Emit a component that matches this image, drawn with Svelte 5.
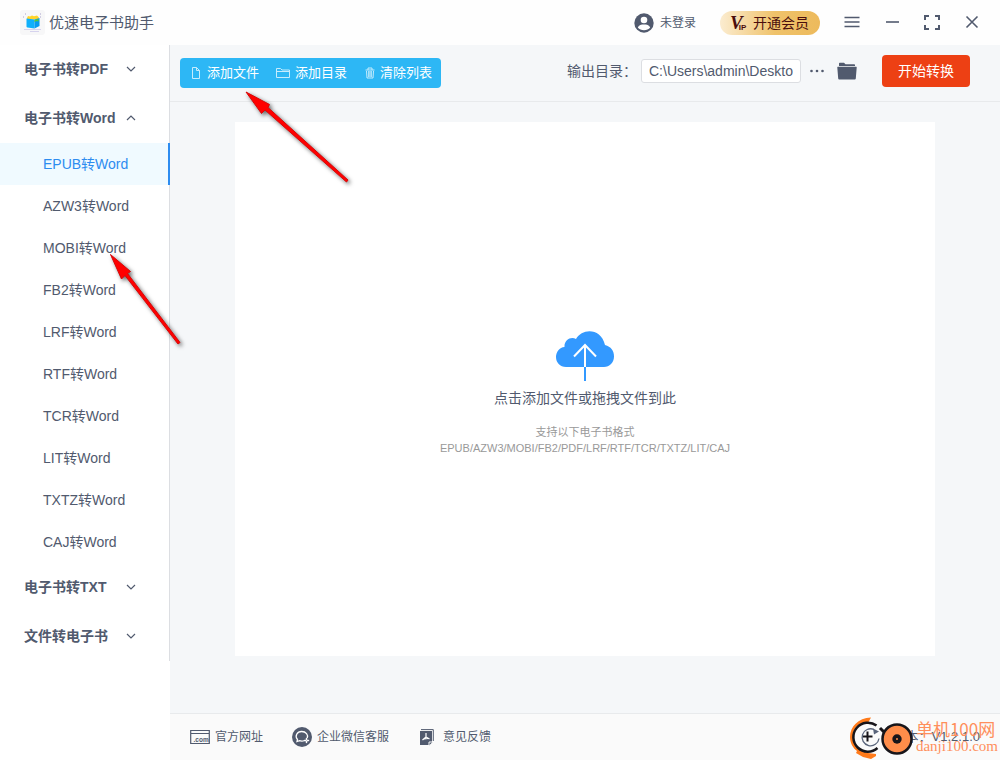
<script>
  const groups = [
    { label: '电子书转PDF', open: false, items: [] },
    {
      label: '电子书转Word',
      open: true,
      items: ['EPUB', 'AZW3', 'MOBI', 'FB2', 'LRF', 'RTF', 'TCR', 'LIT', 'TXTZ', 'CAJ'].map((f) => f + '转Word')
    },
    { label: '电子书转TXT', open: false, items: [] },
    { label: '文件转电子书', open: false, items: [] }
  ];
  let active = $state('EPUB转Word');
  let path = $state('C:\\Users\\admin\\Desktop');
</script>

<div class="app">
  <header>
    <div class="brand">
      <svg width="25" height="25" viewBox="0 0 25 25">
        <rect width="25" height="25" rx="3" fill="#f7f7f8" />
        <path d="M7 8l1-2 2 .5 2-1 2 .7 3-.7 2 2-1 2H7z" fill="#ffd42a" />
        <path d="M6.500 8.500l8 1v9l-7-1q-1 0-1-1z" fill="#0fb0fb" />
        <path d="M14.500 9.500l5-1.500v8l-5 2.500z" fill="#079bf0" />
        <path d="M14.500 10l4-1v2.500l-2-.5-2 1z" fill="#52cc38" />
        <path d="M4 19.500h17M10 21.500h9" stroke="#d6d3ee" stroke-width="1" />
        <path d="M3 7h1M20 4h1M20 7h1M5 4h1" stroke="#aaa3cc" />
      </svg>
      <span>优速电子书助手</span>
    </div>
    <div class="tools">
      <button class="plain user">
        <svg width="20" height="20" viewBox="0 0 20 20">
          <circle cx="10" cy="10" r="9.700" fill="#515a6e" />
          <circle cx="10" cy="7" r="3.300" fill="#fff" />
          <path d="M3.800 14.500c1-2.500 3.500-2.900 6.200-2.900s5.200.4 6.200 2.900c-1.500 1.800-3.700 2.700-6.200 2.700s-4.700-.9-6.200-2.700z" fill="#fff" />
        </svg>
        <span>未登录</span>
      </button>
      <button class="vip">
        <span class="mark"><b>V</b><i>IP</i></span>
        <span>开通会员</span>
      </button>
      <div class="window">
        <button class="plain" aria-label="菜单">
          <svg width="16" height="16" viewBox="0 0 16 16"><path d="M.5 2.500h15M.5 7h15M.5 11.500h15" /></svg>
        </button>
        <button class="plain" aria-label="最小化">
          <svg width="16" height="16" viewBox="0 0 16 16"><path d="M2 7h13" /></svg>
        </button>
        <button class="plain" aria-label="最大化">
          <svg width="16" height="16" viewBox="0 0 16 16"><path d="M1 5V1h4M11 1h4v4M15 10v4h-4M5 14H1v-4" stroke-width="2" /></svg>
        </button>
        <button class="plain" aria-label="关闭">
          <svg width="16" height="16" viewBox="0 0 16 16"><path d="M2.500 1.500l11 11M13.500 1.500l-11 11" /></svg>
        </button>
      </div>
    </div>
  </header>

  <div class="body">
    <aside>
      <nav>
        {#each groups as group}
          <button class="group" aria-expanded={group.open}>
            <span>{group.label}</span>
            <svg width="10" height="10" viewBox="0 0 10 10" class:up={group.open}><path d="M1 3l4 4 4-4" /></svg>
          </button>
          {#each group.items as item}
            <button class="item" class:active={item === active} onclick={() => (active = item)}>{item}</button>
          {/each}
        {/each}
      </nav>
    </aside>

    <main>
      <div class="toolbar">
        <div class="actions">
          <button>
            <svg width="12" height="12" viewBox="0 0 12 12"><path d="M2.500 .5h4L9.500 3.500v8h-7zM6.500 .5v3h3" /></svg>
            <span>添加文件</span>
          </button>
          <button>
            <svg width="14" height="12" viewBox="0 0 14 12"><path d="M.5 10.500v-9h4l1.500 1.500h7.500v7.500zM.5 4.500h13" /></svg>
            <span>添加目录</span>
          </button>
          <button class="clear">
            <svg width="10" height="12" viewBox="0 0 10 12"><path d="M.5 3h9M3 3V1h4v2M1.500 4l.5 7h6l.5-7M3.700 4v6M5 4v6M6.300 4v6" /></svg>
            <span>清除列表</span>
          </button>
        </div>
        <div class="output">
          <label for="dir">输出目录：</label>
          <input id="dir" type="text" bind:value={path} />
          <button class="plain dots" aria-label="选择目录">
            <svg width="16" height="16" viewBox="0 0 16 16"><circle cx="2.500" cy="8" r="1.300" /><circle cx="8" cy="8" r="1.300" /><circle cx="13.500" cy="8" r="1.300" /></svg>
          </button>
          <button class="plain folder" aria-label="打开目录">
            <svg width="20" height="18" viewBox="0 0 20 18"><path d="M2 3V1.500Q2 .8 2.700.8H7l1.500 1.400h8.800q.7 0 .7.800v1H2z" /><path d="M.8 4.800h18.400q.6 0 .5.700l-.9 11q-.1 1-1 1H2.200q-.9 0-1-1l-.9-11q-.1-.7.5-.7z" /></svg>
          </button>
          <button class="start">开始转换</button>
        </div>
      </div>

      <button class="drop">
        <svg width="60" height="52" viewBox="0 0 60 52">
          <path d="M11 37C5 37 1 32.500 1 27c0-5 3.500-9.500 8.500-10C9 10 16 6 21 9c6-11 25-11.500 29 6 6 1.500 9 6 9 11.500C59 32.500 54.500 37 49 37z" fill="#3399ff" />
          <path d="M30 37V16M19 26.500L30 15l11 11.500" fill="none" stroke="#fff" stroke-width="2" />
          <path d="M30 37v14" stroke="#3399ff" stroke-width="2" />
        </svg>
        <span class="lead">点击添加文件或拖拽文件到此</span>
        <span class="hint">支持以下电子书格式</span>
        <span class="hint">EPUB/AZW3/MOBI/FB2/PDF/LRF/RTF/TCR/TXTZ/LIT/CAJ</span>
      </button>

      <footer>
        <div class="links">
          <a href="#site">
            <svg width="20" height="20" viewBox="0 0 20 20">
              <path d="M.7 3.500h18.600v13H.7zM.7 6.500h18.600" fill="none" stroke="#515a6e" stroke-width="1.200" />
              <text x="3.500" y="14.500" font-size="6.500" font-weight="700" fill="#515a6e">.com</text>
            </svg>
            <span>官方网址</span>
          </a>
          <a href="#service">
            <svg width="20" height="20" viewBox="0 0 20 20">
              <circle cx="10" cy="10" r="10" fill="#515a6e" />
              <path d="M12.500 13.500c-1.500.7-3.500.7-5 .2L5 14.500l.5-2C2.500 9.300 5 4.500 9.700 4.500c4.300 0 6.800 3.500 5.500 6.500" fill="none" stroke="#fff" stroke-width="1.300" />
              <path d="M14.500 11.500v1M16.500 13.500h-1M14.500 15.500v-1M12.500 13.500h1" stroke="#fff" stroke-width="1.500" stroke-linecap="round" />
            </svg>
            <span>企业微信客服</span>
          </a>
          <a href="#feedback">
            <svg width="20" height="20" viewBox="0 0 20 20">
              <path d="M2 4h12v11l-3 3H2z" fill="#515a6e" />
              <path d="M3 2.600h12.300V14" fill="none" stroke="#515a6e" stroke-width="1" />
              <path d="M11 18.500V15h3.500" fill="#515a6e" stroke="#fafafa" />
              <path d="M8 6v4l-3.500 3M8 10l3.500 2M6 12l4-.5" fill="none" stroke="#fff" stroke-width="1.200" />
            </svg>
            <span>意见反馈</span>
          </a>
        </div>
        <span class="version">版本：V1.2.1.0</span>
        <div class="stamp">
          <svg width="64" height="44" viewBox="0 0 64 44">
            <path d="M21 1.500C8 2 0 11 0 21c0 6 3 11 7 14l-1 2 7 4 8 2 5-3v-2l-8-1C9 35 3 29 3 21 3 13 7 9 12 7l6 0z" fill="#ff7a1a" />
            <path d="M26.500 9.500A14.500 14.500 0 1 0 27.500 32" fill="none" stroke="#17151a" stroke-width="2.500" />
            <path d="M17.500 15.500v10M12.500 20.500h10" stroke="#17151a" stroke-width="2" />
            <path d="M24 13.500a8.500 8.500 0 1 0 5 9" fill="none" stroke="#59647a" stroke-width="1.300" />
            <path d="M23 12.500l6 3-5 3" fill="#59647a" />
            <path d="M30 12l5 5M39 11l-4 6" stroke="#17151a" stroke-width="3" />
            <circle cx="47" cy="23" r="14.500" fill="#ff8d4a" stroke="#17151a" stroke-width="2.500" />
            <circle cx="47" cy="23" r="4.700" fill="#17151a" />
            <circle cx="47" cy="23" r="1" fill="#ff8d4a" />
          </svg>
          <div class="site"><span>单机100网</span><span class="domain">danji100.com</span></div>
        </div>
      </footer>
    </main>
  </div>

  <svg class="arrows" width="360" height="360" viewBox="0 0 360 360" aria-hidden="true">
    <g fill="#f00" stroke="#d60808" stroke-width="1">
      <path d="M246 92L269.500 104.500L268 107.500L348 180L346.500 182L265 110L261.500 113.500z" />
      <path d="M110.500 254.500L130.500 271.500L127.500 273.500L180 342.500L178 344L125 275.500L121.500 279z" />
    </g>
  </svg>
</div>

<style>
  :global(body) { margin: 0; }
  .app {
    position: relative;
    display: flex;
    flex-direction: column;
    min-height: 100vh;
    background: #fff;
    color: #515a6e;
    font: 14px/20px "Liberation Sans", "Noto Sans CJK SC", sans-serif;
  }
  button, input {
    font: inherit;
    color: inherit;
    box-sizing: border-box;
    margin: 0;
  }
  button {
    border: 0;
    padding: 0;
    background: none;
    cursor: pointer;
  }
  svg { flex: none; display: block; }
  header {
    display: flex;
    justify-content: space-between;
    align-items: center;
    height: 45px;
    padding: 0 20px;
    background: #fefefe;
  }
  .brand {
    display: flex;
    align-items: center;
    gap: 4px;
    font-size: 15px;
  }
  .tools { display: flex; align-items: center; }
  .user {
    display: flex;
    align-items: center;
    gap: 6px;
    font-size: 12px;
  }
  .vip {
    display: flex;
    align-items: center;
    gap: 4px;
    height: 24px;
    margin-left: 24px;
    padding: 0 11px 0 10px;
    border-radius: 12px;
    background: linear-gradient(90deg, #fbecd0, #efc26a 55%, #edba5c);
    color: #4a0d0d;
  }
  .mark { display: flex; align-items: flex-end; width: 19px; }
  .mark b { font: italic 700 19px/18px "Liberation Serif", serif; }
  .mark i { font: 700 8px/8px "Liberation Sans", sans-serif; margin-left: -4px; }
  .window {
    display: flex;
    gap: 24px;
    margin-left: 24px;
  }
  .window svg { fill: none; stroke: #515a6e; stroke-width: 1.600; }
  .body { display: flex; flex: 1; }
  aside { flex: 0 0 170px; }
  nav {
    display: flex;
    flex-direction: column;
    border-right: 1px solid #dcdee2;
  }
  .group {
    display: flex;
    align-items: center;
    justify-content: space-between;
    height: 49px;
    padding: 0 33px 1px 24px;
    font-weight: 700;
  }
  .group svg { fill: none; stroke: #515a6e; stroke-width: 1.200; }
  .group .up { transform: rotate(180deg); }
  .item {
    height: 42px;
    padding-left: 43px;
    text-align: left;
  }
  .item.active {
    margin-right: -1px;
    border-right: 2px solid #2d8cf0;
    background: #f0faff;
    color: #2d8cf0;
  }
  main {
    display: flex;
    flex: 1;
    flex-direction: column;
    min-width: 0;
    background: #f5f7f9;
  }
  .toolbar {
    display: flex;
    align-items: center;
    justify-content: space-between;
    box-sizing: border-box;
    height: 57px;
    padding: 0 30px 0 10px;
    border-bottom: 1px solid #e8eaec;
  }
  .actions {
    display: flex;
    align-items: center;
    height: 30px;
    padding: 0 9px 0 10px;
    gap: 17px;
    border-radius: 4px;
    background: #2db7f5;
    color: #fff;
    font-size: 13px;
  }
  .actions button { display: flex; align-items: center; gap: 5px; }
  .actions .clear { margin-left: 1px; }
  .actions svg { fill: none; stroke: #c6ecfd; stroke-width: 1; }
  .output { display: flex; align-items: center; margin-top: -4px; }
  .output input {
    width: 160px;
    height: 24px;
    margin-left: 4px;
    padding: 0 7px;
    border: 1px solid #dcdee2;
    border-radius: 3px;
    background: #fff;
  }
  .output svg { fill: #515a6e; }
  .dots { margin-left: 8px; }
  .folder { margin-left: 12px; }
  .start {
    width: 88px;
    height: 32px;
    margin-left: 25px;
    border-radius: 4px;
    background: #ed4014;
    color: #fff;
  }
  .drop {
    display: flex;
    flex: 1;
    flex-direction: column;
    align-items: center;
    justify-content: center;
    margin: 20px 65px 57px;
    padding-top: 8px;
    background: #fff;
  }
  .lead { margin: 6px 0 16px; }
  .hint { color: #999; font-size: 11px; line-height: 16px; }
  footer {
    position: relative;
    display: flex;
    align-items: center;
    justify-content: space-between;
    height: 46px;
    padding: 0 20px;
    border-top: 1px solid #e8eaec;
    background: #fafafa;
    font-size: 12px;
  }
  .links { display: flex; gap: 29px; }
  .links a {
    display: flex;
    align-items: center;
    gap: 5px;
    color: inherit;
    text-decoration: none;
  }
  .version { font-size: 13px; }
  .stamp {
    position: absolute;
    right: 2px;
    bottom: 0;
    display: flex;
    align-items: center;
    gap: 2px;
  }
  .site {
    display: flex;
    flex-direction: column;
    padding-bottom: 2px;
    color: #ff8f5c;
    font: 17px/19px "Noto Sans CJK SC", sans-serif;
  }
  .domain { font: 15px/17px "Liberation Serif", serif; }
  .arrows {
    position: absolute;
    left: 0;
    top: 0;
    pointer-events: none;
    filter: drop-shadow(2px 2px 2px rgba(0, 0, 0, 0.6));
  }
</style>
